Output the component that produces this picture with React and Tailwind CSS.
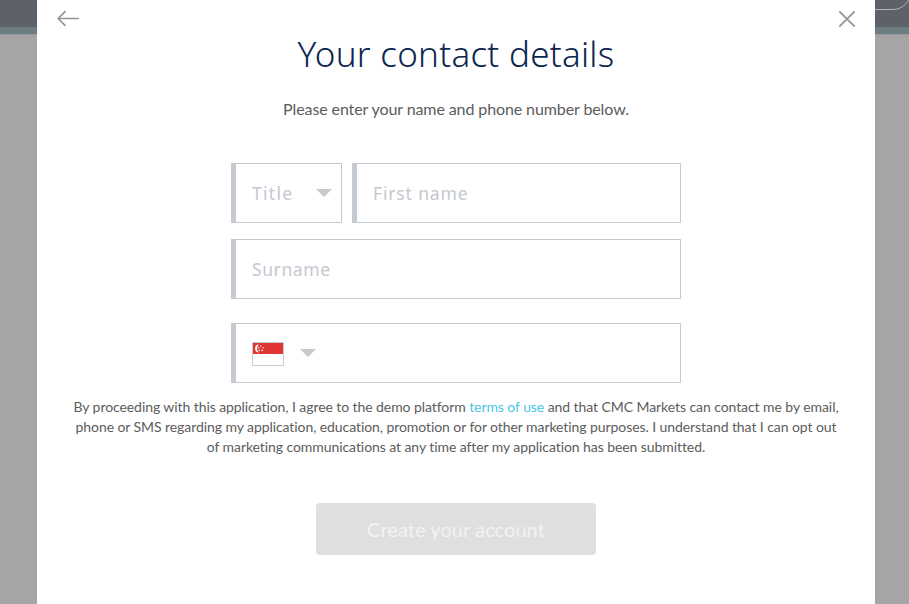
function Caret() {
  return (
    <svg width="16" height="8" viewBox="0 0 16 8" fill="#c4cacf" className="shrink-0">
      <path d="M0 0h16L8 8z" />
    </svg>
  );
}

function SingaporeFlag() {
  return (
    <svg width="32" height="24" viewBox="0 0 32 24" className="shrink-0">
      <rect x="0.5" y="0.5" width="31" height="23" fill="#fff" stroke="#c4cacf" />
      <rect x="1" y="1" width="30" height="11" fill="#e03530" />
      <path d="M7 2.6a3.9 3.9 0 1 0 0 7.8 4.9 4.9 0 0 1 0-7.8z" fill="#fff" />
      <g fill="#fff" opacity="0.85">
        <circle cx="8.8" cy="4" r="0.8" />
        <circle cx="11" cy="5.8" r="0.8" />
        <circle cx="10.2" cy="8.4" r="0.8" />
        <circle cx="7.4" cy="8.4" r="0.8" />
        <circle cx="6.7" cy="5.8" r="0.8" />
      </g>
    </svg>
  );
}

const field = "h-15 border border-l-[5px] border-[#c4cacf] bg-white";
const fieldText =
  "font-['Noto_Sans',sans-serif] text-[17.5px] text-[#c4c8cf] placeholder:text-[#c4c8cf] placeholder:opacity-100 outline-none";

export default function App() {
  return (
    <div className="relative h-[604px] w-full overflow-hidden bg-[#a5a5a5] font-['Lato',sans-serif] text-[#5c5c5c] [font-variant-ligatures:none]">
      {/* Dimmed page header */}
      <header className="flex h-[35px] justify-end overflow-hidden border-b border-[#979a9b] bg-[linear-gradient(#5d616a_27px,#6a7d7f_27px)]">
        <div className="-mt-8 -mr-0.5 h-[42px] w-30 rounded-[18px] border border-[#b5b6ba]" />
      </header>

      {/* Modal */}
      <main className="absolute inset-y-0 left-[37px] flex w-[838px] flex-col items-center bg-white">
        <div className="flex h-[30px] w-full items-start justify-between pr-[19px] pl-5">
          <button aria-label="Back" className="mt-[10px]">
            <svg width="22" height="17" viewBox="0 0 22 17" fill="none" stroke="#959595" strokeWidth="1.7">
              <path d="M8.5 1.2 1.2 8.5l7.3 7.3M1.2 8.5H22" />
            </svg>
          </button>
          <button aria-label="Close" className="mt-[10px]">
            <svg width="18" height="18" viewBox="0 0 18 18" fill="none" stroke="#959595" strokeWidth="1.7">
              <path d="m1.3 1.3 15.4 15.4M16.7 1.3 1.3 16.7" />
            </svg>
          </button>
        </div>

        <h1 className="h-12 font-['Noto_Sans',sans-serif] text-[35px] leading-[47px] font-light tracking-[0.27px] whitespace-nowrap text-[#0b2650]">
          Your contact details
        </h1>
        <p className="mt-[19px] text-base leading-6 tracking-[-0.1px]">Please enter your name and phone number below.</p>

        <form className="mt-[42px] w-[450px]">
          <div className="flex gap-[10px]">
            <div className={`${field} flex w-[111px] items-center justify-between pr-[9px] pl-4`}>
              <span className={`${fieldText} tracking-[1.3px]`}>Title</span>
              <Caret />
            </div>
            <input
              className={`${field} ${fieldText} min-w-0 flex-1 px-4 tracking-[0.85px]`}
              placeholder="First name"
            />
          </div>
          <input className={`${field} ${fieldText} mt-4 block w-full px-4 tracking-[0.6px]`} placeholder="Surname" />
          <div className={`${field} mt-6 flex items-center gap-4 px-4`}>
            <div className="mt-0.5">
              <SingaporeFlag />
            </div>
            <Caret />
            <input aria-label="Phone number" className={`${fieldText} min-w-0 flex-1`} />
          </div>
        </form>

        <p className="mt-[14px] text-center text-sm leading-5 tracking-[-0.075px] whitespace-nowrap">
          By proceeding with this application, I agree to the demo platform{" "}
          <a className="text-[#49c6e5]">terms of use</a> and that CMC Markets can contact me by email,
          <br />
          phone or SMS regarding my application, education, promotion or for other marketing purposes. I understand that
          I can opt out
          <br />
          of marketing communications at any time after my application has been submitted.
        </p>

        <button className="mt-[46px] h-13 w-[280px] rounded bg-[#dfdfdf] text-xl tracking-[0.06px] text-[#f2f2f2]">
          Create your account
        </button>
      </main>
    </div>
  );
}
